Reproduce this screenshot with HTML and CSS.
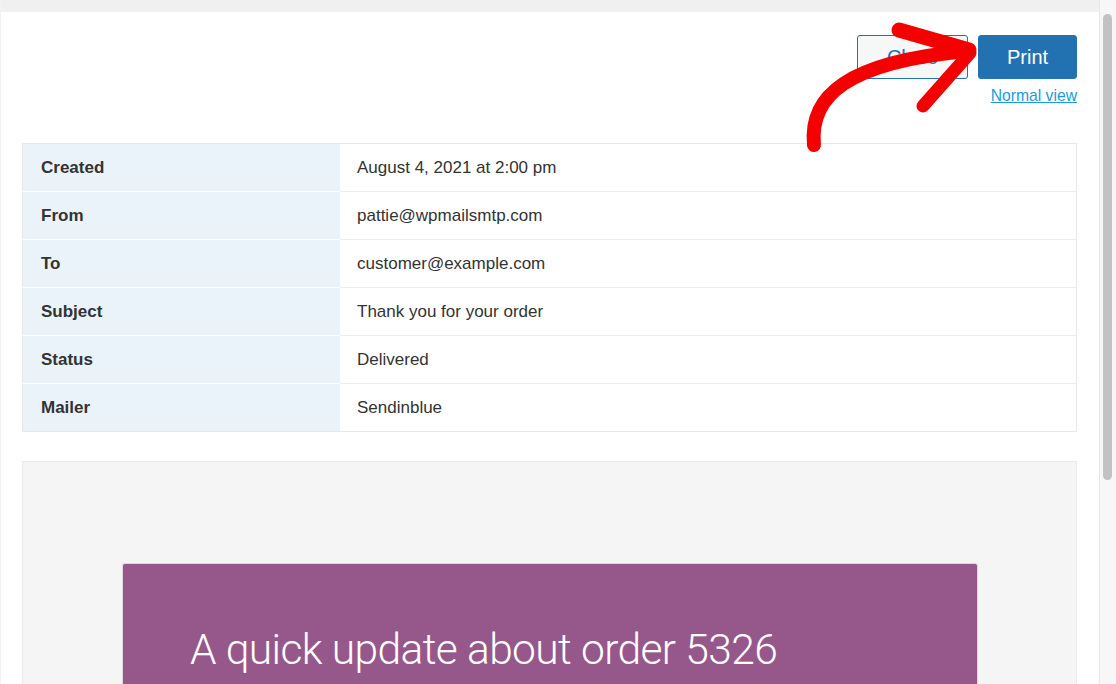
FILE: index.html
```html
<!DOCTYPE html>
<html lang="en">
<head>
  <meta charset="UTF-8" />
  <title>Email log - print preview</title>
  <link rel="stylesheet" href="styles.css">
</head>
<body>
  <div class="window">
    <div class="main">
      <div class="topbar"></div>
      <div class="content">
        <div class="actions">
          <div class="buttons">
            <button class="btn btn-close">Close</button>
            <button class="btn btn-print">Print</button>
          </div>
          <a class="normal-view" href="#">Normal view</a>
        </div>

        <table class="details">
          <tr><th>Created</th><td>August 4, 2021 at 2:00 pm</td></tr>
          <tr><th>From</th><td>pattie@wpmailsmtp.com</td></tr>
          <tr><th>To</th><td>customer@example.com</td></tr>
          <tr><th>Subject</th><td>Thank you for your order</td></tr>
          <tr><th>Status</th><td>Delivered</td></tr>
          <tr><th>Mailer</th><td>Sendinblue</td></tr>
        </table>

        <div class="preview">
          <div class="email-card">
            <h1>A quick update about order 5326</h1>
          </div>
        </div>
      </div>

      <!-- hand drawn arrow pointing at the Print button -->
      <svg class="arrow" width="1099" height="684" viewBox="0 0 1099 684">
        <g fill="none" stroke="#f50000" stroke-linecap="round" stroke-linejoin="round">
          <path d="M813 145 C 808 96, 846 62, 966 51" stroke-width="14"/>
          <path d="M898 30 L 968 50" stroke-width="15"/>
          <path d="M922 106 L 969 53" stroke-width="13"/>
        </g>
      </svg>
    </div>
    <div class="scrollbar"><div class="thumb"></div></div>
  </div>
</body>
</html>
```

FILE: styles.css
```css
:root {
  font-family: "Liberation Sans", Arial, sans-serif;
}
html, body {
  margin: 0; padding: 0;
  height: 100%;
  overflow: hidden;
  background: #fff;
}
.window {
  display: flex;
  height: 684px;
}
.main {
  position: relative;
  flex: 1;
  display: flex;
  flex-direction: column;
  overflow: hidden;
  border-left: 1px solid #f2f2f2;
}
.topbar {
  height: 12px;
  background: #f0f0f0;
  flex: none;
}
.content {
  padding: 23px 22px 0 21px;
}
.actions {
  display: flex;
  flex-direction: column;
  align-items: flex-end;
}
.buttons {
  display: flex;
  gap: 10px;
}
.btn {
  height: 44px;
  font-family: inherit;
  font-size: 20px;
  border-radius: 3px;
  padding: 0;
}
.btn-close {
  width: 111px;
  color: #2271b1;
  background: #f6f7f7;
  border: 1px solid #2271b1;
}
.btn-print {
  width: 99px;
  color: #fff;
  background: #2271b1;
  border: 1px solid #2271b1;
}
.normal-view {
  margin-top: 8px;
  font-size: 15.7px;
  color: #1a9cd8;
  text-decoration: underline;
}
.details {
  width: 100%;
  margin-top: 38px;
  border-collapse: collapse;
  border: 1px solid #e8e8e8;
  font-size: 17px;
  color: #333;
}
.details th,
.details td {
  height: 47px;
  padding: 0 17px;
  text-align: left;
  border-top: 1px solid #ededed;
}
.details th {
  width: 282px;
  font-weight: bold;
  background: #eaf2fa;
  border-top-color: #fff;
  padding-left: 18px;
}
.details tr:first-child th,
.details tr:first-child td {
  border-top: none;
}
.preview {
  margin-top: 29px;
  height: 400px;
  background: #f5f5f5;
  border: 1px solid #ebebeb;
  padding: 101px 98px 0 99px;
}
.email-card {
  height: 300px;
  background: #96588a;
  border: 1px solid #e0d4de;
  border-radius: 3px;
  padding: 0 67px;
}
.email-card h1 {
  margin: 60px 0 0;
  font-family: Roboto, "Liberation Sans", sans-serif;
  font-weight: 300;
  font-size: 42.5px;
  line-height: 52px;
  color: #fff;
  letter-spacing: -0.6px;
}
.arrow {
  position: absolute;
  left: 0;
  top: 0;
  pointer-events: none;
}
.scrollbar {
  width: 17px;
  flex: none;
  background: #f7f7f7;
  border-left: 1px solid #e6e6e6;
  padding: 14px 4px 0 3px;
  box-sizing: border-box;
}
.thumb {
  height: 466px;
  background: #c2c2c2;
  border-radius: 5px;
}
```
